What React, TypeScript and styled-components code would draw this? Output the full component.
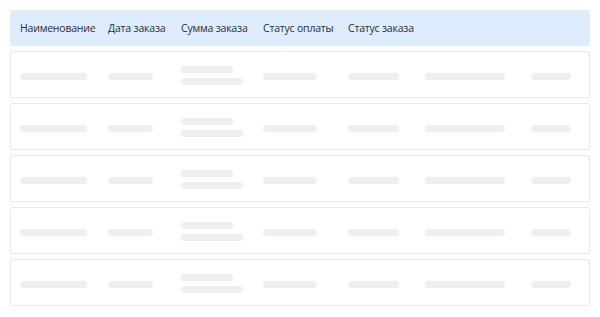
import React from 'react';
import styled, { createGlobalStyle } from 'styled-components';

const GlobalStyle = createGlobalStyle`
    html, body {
        margin: 0;
        padding: 0;
        background: #ffffff;
    }
`;

const COLUMNS = '88px 73px 82px 85px 77px 106px 1fr';

const Page = styled.div`
    width: 600px;
    height: 317px;
    box-sizing: border-box;
    padding: 10px;
    display: flex;
    flex-direction: column;
    gap: 5px;
    font-family: 'Open Sans', 'Liberation Sans', sans-serif;
`;

const HeaderRow = styled.div`
    display: grid;
    grid-template-columns: ${COLUMNS};
    align-items: center;
    height: 36px;
    padding: 0 0 1px 10px;
    box-sizing: border-box;
    background: #ddedfd;
    border-radius: 2px;
`;

const HeaderCell = styled.div`
    font-size: 10.5px;
    letter-spacing: -0.2px;
    color: #2b2e33;
    white-space: nowrap;
`;

const BodyRow = styled.div`
    display: grid;
    grid-template-columns: ${COLUMNS};
    align-items: center;
    height: 47px;
    padding-left: 9px;
    box-sizing: border-box;
    border: 1px solid #ececec;
    border-radius: 2px;
`;

const Cell = styled.div<{ $shift: number }>`
    display: flex;
    flex-direction: column;
    gap: 5px;
    padding-top: ${({ $shift }) => $shift}px;
`;

const Bar = styled.div<{ $width: number }>`
    width: ${({ $width }) => $width}px;
    height: 7px;
    border-radius: 4px;
    background: #efefef;
`;

const headers = ['Наименование', 'Дата заказа', 'Сумма заказа', 'Статус оплаты', 'Статус заказа', '', ''];

const SkeletonRow = () => (
    <BodyRow>
        <Cell $shift={4}>
            <Bar $width={67} />
        </Cell>
        <Cell $shift={4}>
            <Bar $width={45} />
        </Cell>
        <Cell $shift={2}>
            <Bar $width={52} />
            <Bar $width={62} />
        </Cell>
        <Cell $shift={4}>
            <Bar $width={54} />
        </Cell>
        <Cell $shift={4}>
            <Bar $width={51} />
        </Cell>
        <Cell $shift={4}>
            <Bar $width={80} />
        </Cell>
        <Cell $shift={4}>
            <Bar $width={40} />
        </Cell>
    </BodyRow>
);

const App = () => (
    <>
        <GlobalStyle />
        <Page>
            <HeaderRow>
                {headers.map((title, i) => (
                    <HeaderCell key={i}>{title}</HeaderCell>
                ))}
            </HeaderRow>
            {[0, 1, 2, 3, 4].map(i => (
                <SkeletonRow key={i} />
            ))}
        </Page>
    </>
);

export default App;
